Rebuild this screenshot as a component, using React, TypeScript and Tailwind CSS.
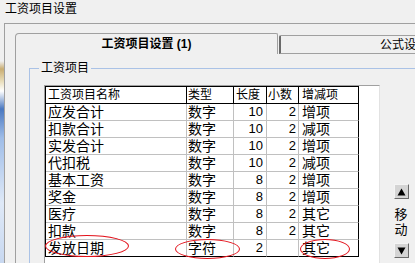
const FONT = "font-['Liberation_Sans','Noto_Sans_CJK_SC',sans-serif]";

const rows: string[][] = [
  ["应发合计", "数字", "10", "2", "增项"],
  ["扣款合计", "数字", "10", "2", "减项"],
  ["实发合计", "数字", "10", "2", "增项"],
  ["代扣税", "数字", "10", "2", "减项"],
  ["基本工资", "数字", "8", "2", "增项"],
  ["奖金", "数字", "8", "2", "增项"],
  ["医疗", "数字", "8", "2", "其它"],
  ["扣款", "数字", "8", "2", "其它"],
  ["发放日期", "字符", "2", "", "其它"],
];

const headers = ["工资项目名称", "类型", "长度", "小数", "增减项"];
const headPad = ["pl-[2px]", "pl-[1px]", "pl-[2px]", "pl-[1px]", "pl-[3px]"];
const bodyPad = [
  "pl-[2px] text-[14px]",
  "pl-[1px] text-[14px]",
  "pr-[3px] text-right text-[13px]",
  "pr-[2px] text-right text-[13px]",
  "pl-[3px] text-[14px]",
];

function MoveButton({ up }: { up: boolean }) {
  return (
    <div className="w-[15px] h-[15px] bg-[#d4d4d4] border border-t-[#f4f4f4] border-l-[#f4f4f4] border-r-[#6a6a6a] border-b-[#6a6a6a] flex items-center justify-center">
      <svg width="9" height="8" viewBox="0 0 9 8">
        {up ? <polygon points="4.5,0.5 8.5,7.5 0.5,7.5" fill="#000" /> : <polygon points="0.5,0.5 8.5,0.5 4.5,7.5" fill="#000" />}
      </svg>
    </div>
  );
}

export default function App() {
  return (
    <div className={`relative w-[415px] h-[263px] overflow-hidden bg-[#f0f0f0] text-black ${FONT}`}>
      {/* window caption */}
      <div className="h-[23px] pl-[5px] pt-[1px] text-[12px] leading-[16px]">工资项目设置</div>

      <div className="flex">
        {/* desktop showing at the edge */}
        <div className="w-[4px] h-[240px] shrink-0 bg-[linear-gradient(to_bottom,#f0f0f0_0px,#f0f0f0_38px,#c9ad72_46px,#e8dcb8_58px,#ffffff_68px,#4a78c0_86px,#9fbde8_115px,#dfe9f7_180px,#c8d8f0_240px)]" />

        <div className="w-[480px] shrink-0 border-l border-t border-[#a0a0a0] pl-[10px] pt-[9px]">
          {/* tabs */}
          <div className="flex items-end h-[21px]">
            <div className="w-[263px] h-[21px] shrink-0 border-l border-t border-r border-[#a0a0a0] rounded-tl-[4px] rounded-tr-[2px] flex items-center justify-center text-[12px] font-bold leading-[14px] pb-[1px]">
              工资项目设置 (1)
            </div>
            <div className="ml-[1px] flex-1 h-[19px] border-l-2 border-t border-b border-l-[#6a6a6a] border-t-[#a0a0a0] border-b-[#a0a0a0] rounded-tl-[2px] pl-[99px] pt-[1px] text-[12px] leading-[16px]">
              公式设置 (2)
            </div>
          </div>

          {/* tab page */}
          <div className="border-l border-[#a0a0a0] pl-[13px] pt-[14px] h-[220px]">
            <div className="relative border-l border-t border-[#aac2e6] pl-[14px] pt-[16px]">
              <span className="absolute left-[9px] top-[-8px] bg-[#f0f0f0] px-[2px] text-[12px] leading-[14px]">工资项目</span>

              <div className="flex">
                <div className="w-[336px] h-[200px] shrink-0 bg-white border-l border-t border-[#a0a0a0] border-r border-r-[#e2e2e2]">
                  <div className="w-[314px] border-l border-t border-black grid grid-cols-[141px_47px_33px_32px_60px]">
                    {headers.map((h, i) => (
                      <div key={h} className={`h-[17px] border-r border-b border-black text-[12px] leading-[16px] ${headPad[i]}`}>
                        {h}
                      </div>
                    ))}
                    {rows.map((r, ri) =>
                      r.map((c, ci) => {
                        const rb = ci === 4 ? "border-r-black" : "border-r-[#c0c0c0]";
                        const bb = ri === rows.length - 1 ? "border-b-black" : "border-b-[#c0c0c0]";
                        return (
                          <div key={`${ri}-${ci}`} className={`h-[17px] border-r border-b leading-[16px] ${rb} ${bb} ${bodyPad[ci]}`}>
                            {c}
                          </div>
                        );
                      })
                    )}
                  </div>
                </div>

                {/* move up / down */}
                <div className="ml-[13px] w-[16px] pt-[99px] flex flex-col items-center">
                  <MoveButton up />
                  <div className="mt-[8px] text-[13px] leading-[15px] flex flex-col items-center">
                    <span>移</span>
                    <span>动</span>
                  </div>
                  <div className="mt-[6px]">
                    <MoveButton up={false} />
                  </div>
                </div>
              </div>
            </div>
          </div>
        </div>
      </div>

      {/* red annotation marks */}
      <div className="absolute left-[45px] top-[235px] w-[84px] h-[22px] border border-[#e3121b] rounded-[50%]" />
      <div className="absolute left-[175px] top-[239px] w-[65px] h-[20px] border border-[#e3121b] rounded-[50%]" />
      <div className="absolute left-[300px] top-[239px] w-[50px] h-[20px] border border-[#e3121b] rounded-[50%]" />
    </div>
  );
}
